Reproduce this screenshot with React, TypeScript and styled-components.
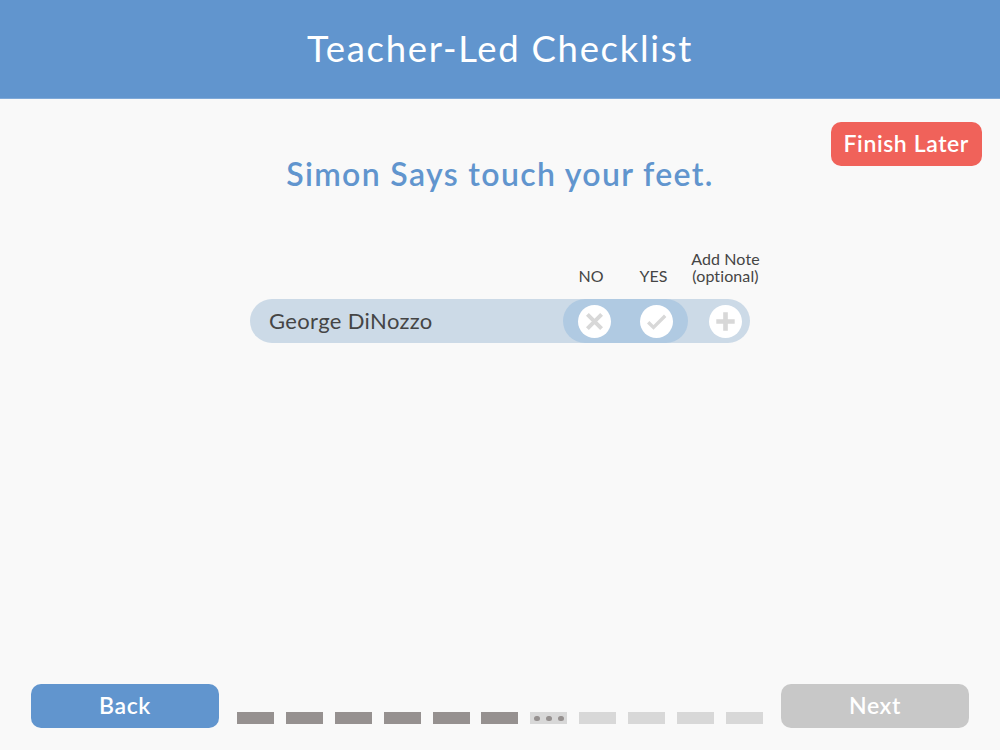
import React from 'react';
import styled, { createGlobalStyle } from 'styled-components';

const colors = {
  blue: '#6195ce',
  red: '#f0625a',
  background: '#f9f9f9',
  row: '#ccdae7',
  toggle: '#b0cae2',
  text: '#454545',
  icon: '#d8d8d8',
  disabled: '#c8c8c8',
  stepDone: '#969190',
  stepTodo: '#d8d8d8',
};

const GlobalStyle = createGlobalStyle`
  * {
    box-sizing: border-box;
  }

  body {
    margin: 0;
    background-color: ${colors.background};
    font-family: Lato, 'Open Sans', sans-serif;
    font-variant-ligatures: none;
  }
`;

const Page = styled.div`
  width: 1000px;
  height: 750px;
  display: flex;
  flex-direction: column;
  background-color: ${colors.background};
  overflow: hidden;
`;

const Header = styled.header`
  height: 99px;
  flex-shrink: 0;
  display: flex;
  justify-content: center;
  padding-top: 24px;
  background-color: ${colors.blue};
  border-bottom: 1px solid #7fa9d8;
`;

const Title = styled.h1`
  margin: 0;
  font-size: 36.5px;
  line-height: 48px;
  font-weight: 400;
  letter-spacing: 1.7px;
  color: #fff;
  white-space: nowrap;
`;

const ActionBar = styled.div`
  display: flex;
  justify-content: flex-end;
  padding: 22.5px 18.5px 0 0;
`;

const Button = styled.button<{ $color: string; $width: number }>`
  width: ${props => props.$width}px;
  height: 44px;
  padding: 0 0 2px;
  border: none;
  border-radius: 10px;
  background-color: ${props => props.$color};
  color: #fff;
  font-family: inherit;
  font-size: 23px;
  line-height: 28px;
  font-weight: 600;
  letter-spacing: 0.6px;
  white-space: nowrap;
`;

const Prompt = styled.h2`
  margin: -12px 0 0;
  text-align: center;
  font-size: 32px;
  line-height: 40px;
  font-weight: 600;
  letter-spacing: 1.35px;
  color: ${colors.blue};
  white-space: nowrap;
`;

const Checklist = styled.main`
  width: 500px;
  margin: 56.5px auto 0;
`;

const Columns = styled.div`
  display: grid;
  grid-template-columns: 310px 62px 63px 81px;
  align-items: end;
  width: 516px;
  height: 34px;
`;

const ColumnLabel = styled.div`
  text-align: center;
  font-size: 16px;
  line-height: 17px;
  letter-spacing: 0.1px;
  color: ${colors.text};
  white-space: nowrap;
`;

const Row = styled.div`
  display: flex;
  align-items: center;
  height: 44px;
  margin-top: 15px;
  padding: 0 8.5px 0 19px;
  border-radius: 22px;
  background-color: ${colors.row};
`;

const StudentName = styled.div`
  width: 293.5px;
  padding-bottom: 1px;
  font-size: 22px;
  line-height: 28px;
  letter-spacing: 0.35px;
  color: ${colors.text};
  white-space: nowrap;
`;

const Toggle = styled.div`
  display: flex;
  align-items: center;
  justify-content: space-between;
  width: 125.5px;
  height: 44px;
  margin-right: 20.5px;
  padding: 0 15px;
  border-radius: 22px;
  background-color: ${colors.toggle};
`;

const RoundButton = styled.button`
  display: flex;
  align-items: center;
  justify-content: center;
  width: 33px;
  height: 33px;
  flex-shrink: 0;
  padding: 0;
  border: none;
  border-radius: 50%;
  background-color: #fff;
`;

const Footer = styled.footer`
  display: flex;
  align-items: flex-start;
  justify-content: space-between;
  margin-top: auto;
  padding: 0 31px 22px;
`;

const Steps = styled.div`
  display: flex;
  justify-content: space-between;
  width: 526px;
  margin-top: 28px;
`;

const Step = styled.div<{ $done: boolean }>`
  display: flex;
  align-items: center;
  justify-content: center;
  gap: 6.5px;
  width: 37px;
  height: 12px;
  background-color: ${props => (props.$done ? colors.stepDone : colors.stepTodo)};
`;

const Dot = styled.span`
  width: 5.5px;
  height: 5.5px;
  margin-top: 1px;
  border-radius: 50%;
  background-color: ${colors.stepDone};
`;

const CrossIcon = () => (
  <svg width="33" height="33" viewBox="0 0 33 33">
    <path d="M9.4 9.4L23.6 23.6M23.6 9.4L9.4 23.6" stroke={colors.icon} strokeWidth="4" />
  </svg>
);

const CheckIcon = () => (
  <svg width="33" height="33" viewBox="0 0 33 33">
    <path d="M8.2 17.2L13.5 22.4L25.2 10.7" fill="none" stroke={colors.icon} strokeWidth="3.4" />
  </svg>
);

const PlusIcon = () => (
  <svg width="33" height="33" viewBox="0 0 33 33">
    <path d="M16.5 7.3V25.7M7.3 16.5H25.7" stroke={colors.icon} strokeWidth="4.6" />
  </svg>
);

const STEP_COUNT = 11;
const CURRENT_STEP = 6;

const App: React.FC = () => {
  return (
    <Page>
      <GlobalStyle />
      <Header>
        <Title>Teacher-Led Checklist</Title>
      </Header>

      <ActionBar>
        <Button $color={colors.red} $width={150.5}>Finish Later</Button>
      </ActionBar>

      <Prompt>Simon Says touch your feet.</Prompt>

      <Checklist>
        <Columns>
          <span />
          <ColumnLabel>NO</ColumnLabel>
          <ColumnLabel>YES</ColumnLabel>
          <ColumnLabel>
            Add Note
            <br />
            (optional)
          </ColumnLabel>
        </Columns>
        <Row>
          <StudentName>George DiNozzo</StudentName>
          <Toggle>
            <RoundButton aria-label="No"><CrossIcon /></RoundButton>
            <RoundButton aria-label="Yes"><CheckIcon /></RoundButton>
          </Toggle>
          <RoundButton aria-label="Add note"><PlusIcon /></RoundButton>
        </Row>
      </Checklist>

      <Footer>
        <Button $color={colors.blue} $width={188}>Back</Button>
        <Steps>
          {Array.from({ length: STEP_COUNT }, (_, i) => (
            <Step key={i} $done={i < CURRENT_STEP}>
              {i === CURRENT_STEP && (
                <>
                  <Dot />
                  <Dot />
                  <Dot />
                </>
              )}
            </Step>
          ))}
        </Steps>
        <Button $color={colors.disabled} $width={188} disabled>Next</Button>
      </Footer>
    </Page>
  );
};

export default App;
